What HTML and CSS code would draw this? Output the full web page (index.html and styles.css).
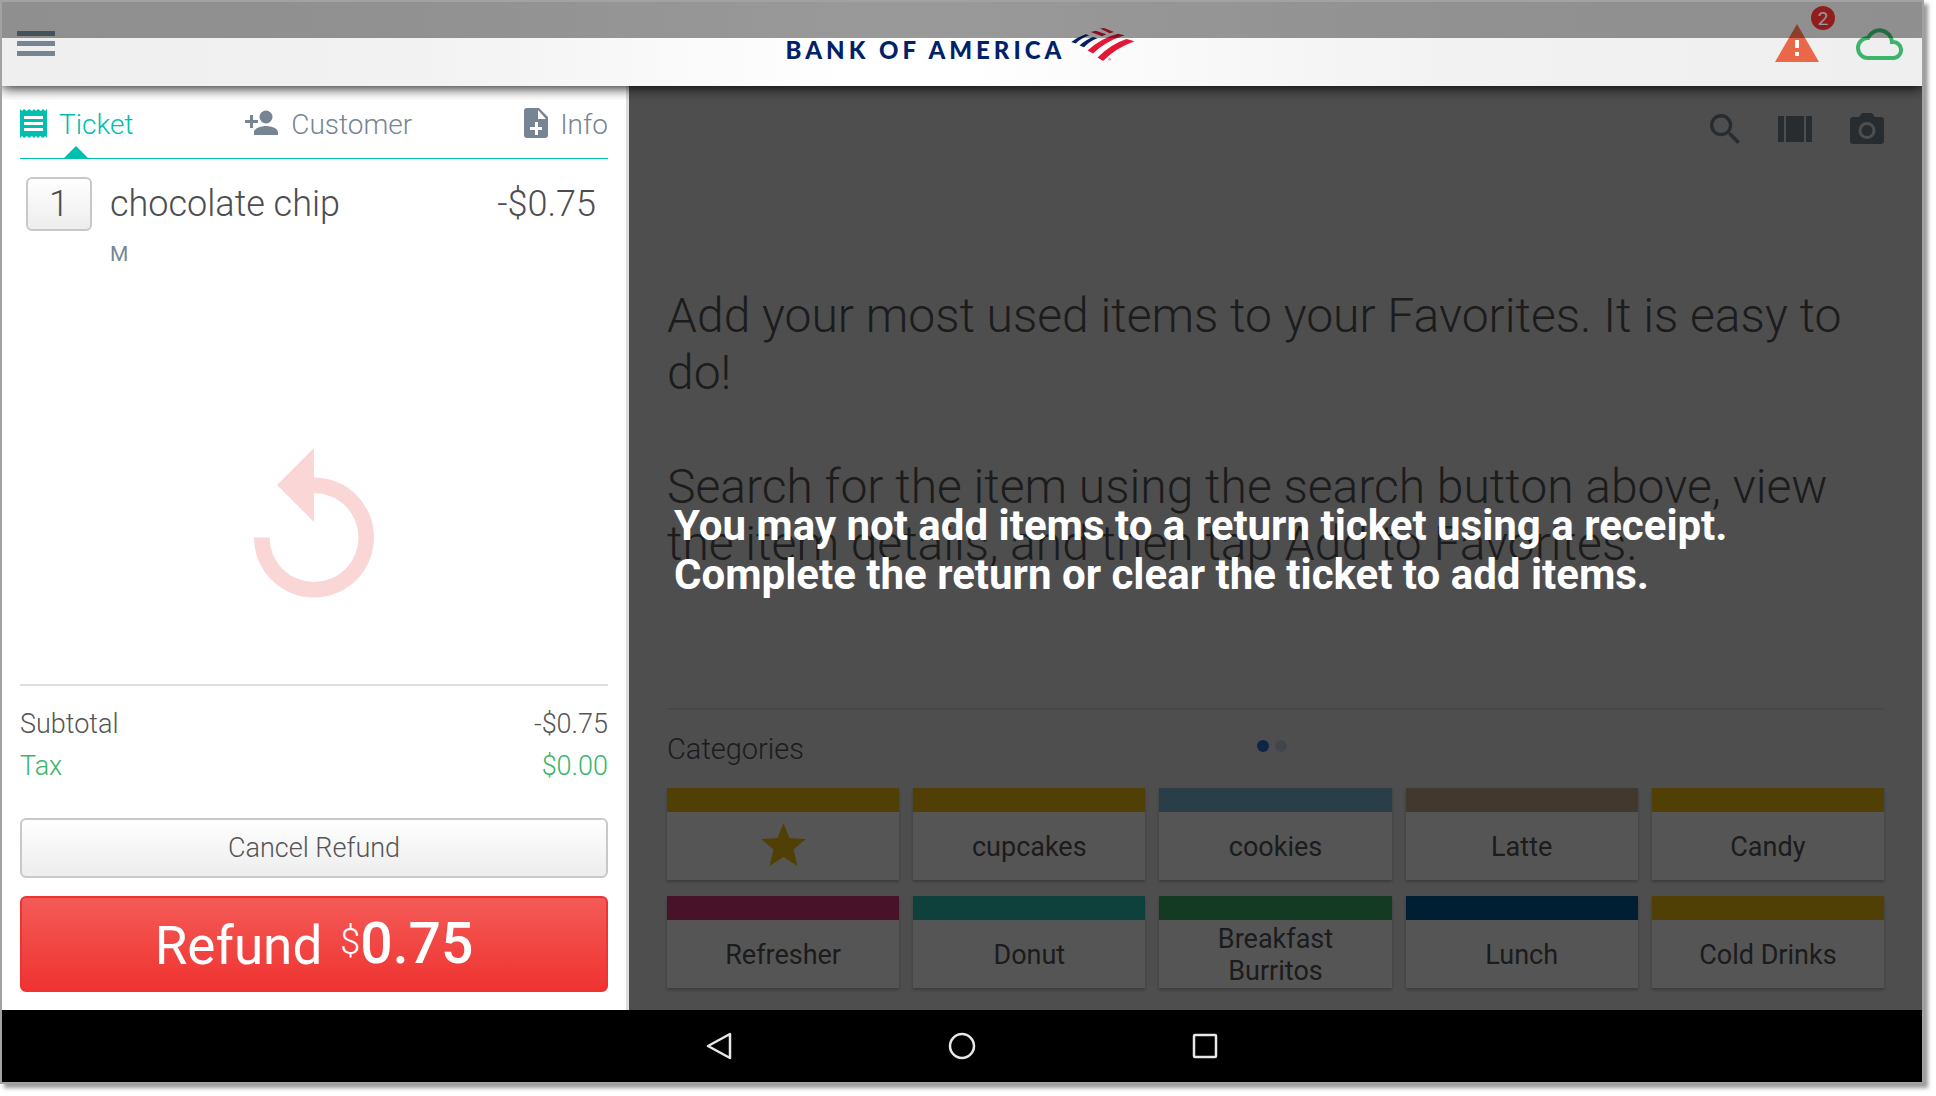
FILE: index.html
```html
<!DOCTYPE html>
<html lang="en">
<head>
<meta charset="utf-8">
<title>Register</title>
<link rel="stylesheet" href="styles.css">
</head>
<body>
<div class="device">
  <header class="topbar">
    <button class="icon-btn menu" aria-label="Menu"><svg width="38" height="26" viewBox="0 0 38 26" fill="#768594"><path d="M0 0h38v5H0zM0 10h38v5H0zM0 20h38v5H0z"/></svg></button>
    <div class="brand">
      <span class="brand-name">BANK OF AMERICA</span>
      <svg width="64" height="34" viewBox="0 0 64 34"><g fill="#012169"><path d="M.3 14Q7 9 14.700 6.300l3.500 1Q10 10 4.700 15.500z"/><path d="M8.500 17.500Q15 11.500 22 9l4.500 1.300Q19 13 13 19.200z"/></g><g fill="#e31837"><path d="M16.500 22.500Q31 9.500 47 5.700l6.700 1.600Q35 13 22 25.500z"/><path d="M26.500 29.500Q40 16 55.500 11l8 2.300Q45 20 32 33z"/><path d="M19.700 4l5-1.300 10.600 3.600-4.300 2zM29 .5l4-.5 10 4-4.300 1.300z"/><circle cx="38.700" cy="31.300" r="1.500" opacity=".35"/></g></svg>
    </div>
    <div class="status">
      <button class="icon-btn alert" aria-label="Alerts"><svg width="44" height="38" viewBox="0 0 44 38"><path fill="#ea6848" d="M22 0l22 38H0z"/><path fill="#fff" d="M20 16h4v8h-4zM20 28h4v4h-4z"/></svg><span class="badge">2</span></button>
      <svg class="cloud" width="48" height="32" viewBox="0 0 48 32" fill="none" stroke="#3ab56a" stroke-width="4"><path d="M12 30A10 10 0 0 1 12 10A12.500 12.500 0 0 1 36 14A8 8 0 0 1 38 30z"/></svg>
    </div>
    <div class="system-strip"></div>
  </header>
  <div class="workspace">
    <section class="ticket">
      <nav class="tabs">
        <a href="#" class="tab active"><svg width="27" height="29" viewBox="0 0 27 29" fill="#00bfae"><path fill-rule="evenodd" d="M0 0l2 2 2-2 3 2 2-2 3 2 2-2 2 2 2-2 3 2 2-2 2 2 2-2v29l-2-2-2 2-3-2-2 2-2-2-2 2-2-2-3 2-2-2-3 2-2-2-2 2zM4 7v3h19V7zm0 6v3h19v-3zm0 6v3h19v-3z"/></svg><span>Ticket</span></a>
        <a href="#" class="tab"><svg width="34" height="26" viewBox="0 0 34 26" fill="#768594"><circle cx="21" cy="7" r="6.500"/><path d="M9 25v-3c0-4 8-6 12-6s12 2 12 6v3zM5 5h3v5h5v3H8v5H5v-5H0v-3h5z"/></svg><span>Customer</span></a>
        <a href="#" class="tab"><svg width="24" height="30" viewBox="0 0 24 30" fill="#768594"><path fill-rule="evenodd" d="M3 0h12l9 9v18a3 3 0 0 1-3 3H3a3 3 0 0 1-3-3V3a3 3 0 0 1 3-3zm11 2v9h8zM11 14v5H6v3h5v5h3v-5h4v-3h-4v-5z"/></svg><span>Info</span></a>
      </nav>
      <div class="line-item">
        <button class="qty">1</button>
        <div class="item-name">chocolate chip<span class="modifier">M</span></div>
        <div class="price">-$0.75</div>
      </div>
      <div class="return-mark"><svg width="120" height="150" viewBox="0 0 120 150" fill="#fad6d6"><path d="M60 0v29.500A60 60 0 1 1 0 89.500H15.500A44.500 44.500 0 1 0 60 45V74L23 37z"/></svg></div>
      <div class="totals">
        <div class="total"><span>Subtotal</span><span>-$0.75</span></div>
        <div class="total tax"><span>Tax</span><span>$0.00</span></div>
      </div>
      <button class="cancel">Cancel Refund</button>
      <button class="refund"><span>Refund</span><span class="amount"><span class="currency">$</span>0.75</span></button>
    </section>
    <main class="catalog">
      <div class="tools">
        <button class="icon-btn" aria-label="Search"><svg width="30" height="30" viewBox="3 3 17.500 17.500" fill="#768594"><path d="M15.500 14h-.79l-.28-.27A6.471 6.471 0 0 0 16 9.500 6.500 6.500 0 1 0 9.500 16c1.610 0 3.090-.59 4.230-1.570l.27.28v.79l5 4.990L20.490 19l-4.990-5zm-6 0C7.010 14 5 11.990 5 9.500S7.010 5 9.500 5 14 7.010 14 9.500 11.990 14 9.500 14z"/></svg></button>
        <button class="icon-btn" aria-label="Browse"><svg width="34" height="26" viewBox="0 0 34 26" fill="#768594"><path d="M0 0h6v26H0zM8 0h18v26H8zM28 0h6v26h-6z"/></svg></button>
        <button class="icon-btn" aria-label="Camera"><svg width="34" height="32" viewBox="0 0 34 32" fill="#768594"><path fill-rule="evenodd" d="M12 0h10l3 4h6a3 3 0 0 1 3 3v21a3 3 0 0 1-3 3H3a3 3 0 0 1-3-3V7a3 3 0 0 1 3-3h6zm5 9a8.500 8.500 0 1 0 0 17 8.500 8.500 0 1 0 0-17z"/><circle cx="17" cy="17.500" r="5.500"/></svg></button>
      </div>
      <div class="favorites">
        <p>Add your most used items to your Favorites. It is easy to do!</p>
        <p>Search for the item using the search button above, view the item details, and then tap Add to Favorites.</p>
      </div>
      <div class="categories-head"><h2>Categories</h2><div class="pager"><i class="on"></i><i></i></div></div>
      <div class="categories">
        <button class="cat yellow" aria-label="Favorites"><svg width="45" height="45" viewBox="0 0 45 45" fill="#efc00f"><path d="M22.500 0l6 15 16.500 1-12.500 10.500L36.500 43l-14-9-14 9 4-16.500L0 16l16.500-1z"/></svg></button>
        <button class="cat yellow">cupcakes</button>
        <button class="cat sky">cookies</button>
        <button class="cat tan">Latte</button>
        <button class="cat yellow">Candy</button>
        <button class="cat pink">Refresher</button>
        <button class="cat teal">Donut</button>
        <button class="cat green">Breakfast Burritos</button>
        <button class="cat blue">Lunch</button>
        <button class="cat yellow">Cold Drinks</button>
      </div>
      <div class="notice"><p>You may not add items to a return ticket using a receipt.<br>Complete the return or clear the ticket to add items.</p></div>
    </main>
  </div>
  <footer class="navbar">
    <button class="icon-btn" aria-label="Back"><svg width="28" height="28" viewBox="0 0 28 28" fill="none" stroke="#e8e8e8" stroke-width="2.500" stroke-linejoin="round"><path d="M25 2v24L3 14z"/></svg></button>
    <button class="icon-btn" aria-label="Home"><svg width="28" height="28" viewBox="0 0 28 28" fill="none" stroke="#e8e8e8" stroke-width="2.500"><circle cx="14" cy="14" r="12"/></svg></button>
    <button class="icon-btn" aria-label="Recent apps"><svg width="28" height="28" viewBox="0 0 28 28" fill="none" stroke="#e8e8e8" stroke-width="2.500"><rect x="3" y="3" width="22" height="22" rx="1"/></svg></button>
  </footer>
</div>
</body>
</html>
```
FILE: styles.css
```css
* { box-sizing: border-box; }
body {
  margin: 0;
  padding: 0 12px 12px 0;
  height: 100vh;
  background: #fff;
  font-family: Roboto, "Liberation Sans", sans-serif;
  font-weight: 300;
  color: #4d4d50;
}
button { font: inherit; color: inherit; cursor: pointer; }
svg { display: block; flex: none; }
h2, p { margin: 0; font-weight: 300; }
.icon-btn { background: none; border: 0; padding: 0; position: relative; }

.device {
  display: flex;
  flex-direction: column;
  height: 100%;
  border: 2px solid #a2a2a2;
  box-shadow: 4px 4px 4px rgba(0, 0, 0, .4);
}

/* header */
.topbar {
  position: relative;
  z-index: 2;
  flex: none;
  display: grid;
  grid-template-columns: 1fr auto 1fr;
  height: 84px;
  padding: 0 18px 0 15px;
  background: linear-gradient(90deg, #efefef, #f2f2f2 22%, #fff 44%, #fff 50%, #f2f2f2 75%, #efefef);
  box-shadow: 0 2px 12px rgba(0, 0, 0, .9);
  clip-path: inset(0 0 -14px 0);
}
.system-strip { position: absolute; inset: 0 0 auto; height: 36px; background: rgba(0, 0, 0, .4); }
.menu { justify-self: start; align-self: start; margin-top: 29px; }
.brand { display: flex; gap: 6px; padding-top: 26px; }
.brand-name {
  padding-top: 7px;
  font: 900 24px/30px Lato, "Open Sans", sans-serif;
  letter-spacing: 4px;
  color: #012169;
}
.status { justify-self: end; display: flex; gap: 37px; padding-top: 22px; }
.alert { height: 38px; }
.cloud { margin-top: 4px; }
.badge {
  position: absolute;
  top: -18px;
  right: -16px;
  width: 24px;
  height: 24px;
  border-radius: 50%;
  background: #ee3331;
  color: #fff;
  font-size: 19px;
  line-height: 26px;
  font-weight: 400;
}

.workspace { flex: 1; display: flex; min-height: 0; }

/* ticket panel */
.ticket {
  flex: none;
  display: flex;
  flex-direction: column;
  width: 627px;
  padding: 18px;
  border-right: 3px solid #ddd;
  background: #fff;
}
.tabs {
  display: flex;
  justify-content: space-between;
  height: 55px;
  border-bottom: 1px solid #00bfae;
}
.tab {
  position: relative;
  display: flex;
  gap: 12px;
  align-items: center;
  height: 38px;
  color: #768594;
  font-size: 28px;
  line-height: 38px;
  text-decoration: none;
}
.tab span { padding-top: 4px; }
.tab.active { color: #00bfae; }
.tab.active::after {
  content: "";
  position: absolute;
  top: 42px;
  left: 44px;
  border: 12px solid transparent;
  border-top: 0;
  border-bottom-color: #00bfae;
}
.line-item { display: flex; padding: 18px 12px 0 6px; font-size: 36px; line-height: 54px; }
.qty {
  width: 66px;
  height: 54px;
  padding: 0;
  border: 2px solid #c8c8c8;
  border-radius: 6px;
  background: linear-gradient(#fff, #ededed);
  line-height: 50px;
}
.item-name { flex: 1; padding-left: 18px; }
.modifier { display: block; font-size: 21px; line-height: 46px; font-weight: 400; color: #768594; }
.return-mark { flex: 1; display: flex; justify-content: center; align-items: flex-end; padding-bottom: 86px; }
.totals { padding: 17px 0 31px; border-top: 2px solid #ddd; font-size: 27px; line-height: 42px; color: #555; }
.total { display: flex; justify-content: space-between; }
.tax { color: #3ab56a; }
.cancel {
  height: 60px;
  border: 2px solid #c8c8c8;
  border-radius: 6px;
  background: linear-gradient(#fff, #ededed);
  font-size: 27px;
  color: #555;
}
.refund {
  display: flex;
  justify-content: center;
  gap: 18px;
  height: 96px;
  margin-top: 18px;
  border: 2px solid #ee3331;
  border-radius: 6px;
  background: linear-gradient(#f45b57, #ef3331);
  color: #fff;
  font-size: 53px;
  line-height: 94px;
  font-weight: 400;
}
.amount { display: flex; font-size: 57px; line-height: 90px; font-weight: 500; }
.currency { font-size: 36px; line-height: 86px; font-weight: 300; }

/* catalog */
.catalog {
  position: relative;
  flex: 1;
  min-width: 0;
  display: flex;
  flex-direction: column;
  padding: 26px 38px 22px;
  background: #eaeaea;
  color: #545459;
}
.tools { display: flex; justify-content: flex-end; align-items: center; gap: 38px; height: 34px; }
.favorites {
  flex: 1;
  display: flex;
  flex-direction: column;
  gap: 57px;
  padding-top: 141px;
  font-size: 48px;
  line-height: 57px;
}
.categories-head {
  position: relative;
  height: 80px;
  padding-top: 20px;
  border-top: 2px solid #d8d8d8;
}
.categories-head h2 { font-size: 29px; line-height: 38px; }
.pager { position: absolute; top: 30px; left: 0; right: 8px; display: flex; justify-content: center; gap: 6px; }
.pager i { width: 12px; height: 12px; border-radius: 50%; background: #c3cfe4; }
.pager .on { background: #2a6fd0; }
.categories { display: grid; grid-template-columns: repeat(5, 1fr); grid-auto-rows: 92px; gap: 16px 14px; }
.cat {
  display: flex;
  align-items: center;
  justify-content: center;
  padding: 2px 40px 0;
  border: 0;
  border-top: 24px solid;
  background: #fff;
  box-shadow: 0 2px 3px rgba(0, 0, 0, .25);
  font-size: 27px;
  line-height: 32px;
  font-weight: 400;
}
.cat svg { margin-bottom: 4px; }
.yellow { border-top-color: #efc00f; }
.sky { border-top-color: #7ebad8; }
.tan { border-top-color: #c6ab8a; }
.pink { border-top-color: #d83678; }
.teal { border-top-color: #2ac0b4; }
.green { border-top-color: #3cae6c; }
.blue { border-top-color: #005d99; }
.notice {
  position: absolute;
  inset: 0;
  display: flex;
  align-items: center;
  padding: 4px 0 0 45px;
  background: rgba(0, 0, 0, .667);
  color: #fff;
}
.notice p { font-size: 42px; line-height: 49px; font-weight: 700; }

.navbar { flex: none; display: flex; justify-content: center; align-items: center; gap: 215px; height: 72px; background: #000; }
```
